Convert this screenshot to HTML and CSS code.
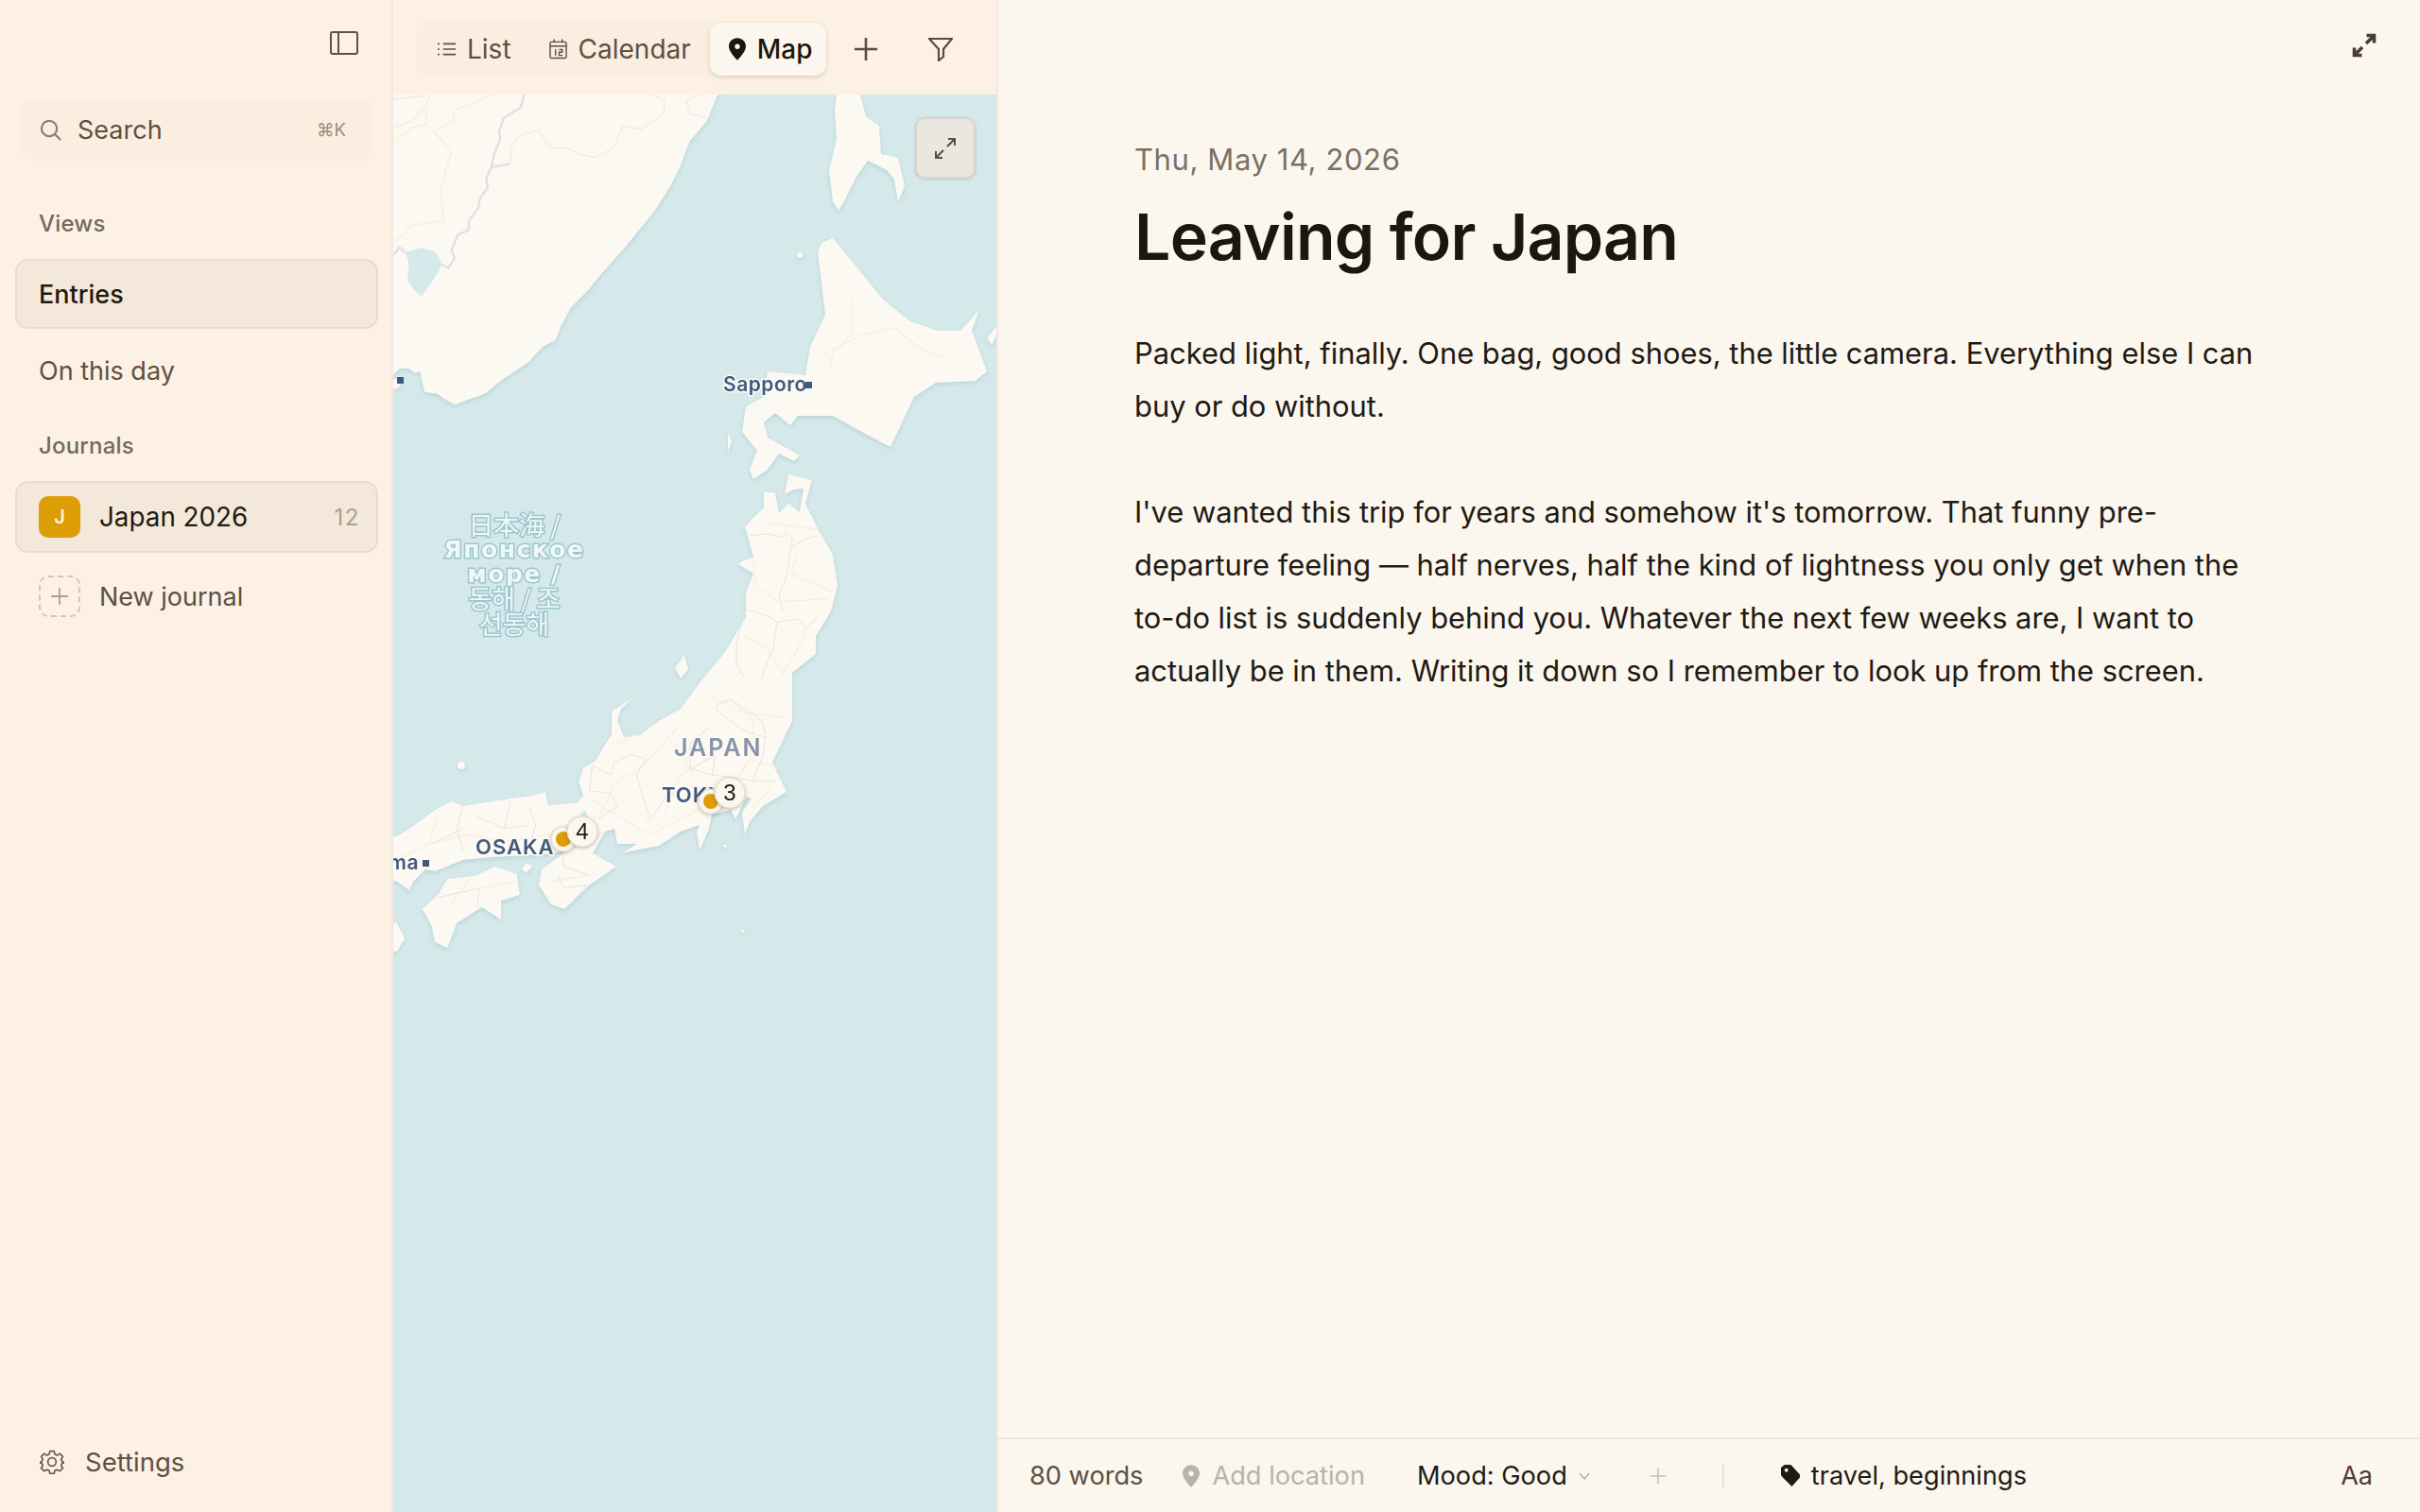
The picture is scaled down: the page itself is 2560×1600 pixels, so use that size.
FILE: index.html
```html
<!DOCTYPE html>
<html lang="en">
<head>
  <meta charset="UTF-8" />
  <title>Japan 2026</title>
  <link rel="stylesheet" href="styles.css">
</head>
<body>
  <div class="app">

    <aside class="sidebar">
      <div class="side-top">
        <svg class="panel-icon" viewBox="0 0 30 26"><rect x="1" y="1" width="28" height="23" rx="2"/><path d="M9 1v23"/></svg>
      </div>
      <div class="search">
        <svg viewBox="0 0 24 24"><circle cx="10.5" cy="10.5" r="8.5"/><path d="M17 17l6 6"/></svg>
        <span class="search-label">Search</span>
        <span class="kbd">⌘K</span>
      </div>
      <h4 class="side-head">Views</h4>
      <div class="side-item active">Entries</div>
      <div class="side-item">On this day</div>
      <h4 class="side-head journals-head">Journals</h4>
      <div class="side-item active journal">
        <span class="badge">J</span>
        <span class="journal-name">Japan 2026</span>
        <span class="count">12</span>
      </div>
      <div class="side-item journal new-journal">
        <span class="badge dashed">
          <svg viewBox="0 0 20 20"><path d="M10 2v16M2 10h16"/></svg>
        </span>
        <span>New journal</span>
      </div>
      <div class="settings">
        <svg viewBox="0 0 24 24"><circle cx="12" cy="12" r="4"/><path d="M10 1.500h4l.7 3 2.300 1 2.700-1.500 2.800 2.800-1.500 2.700 1 2.300 3 .7v0l-3 .7-1 2.300 1.500 2.700-2.800 2.800-2.700-1.500-2.300 1-.7 3h-4l-.7-3-2.300-1-2.700 1.500-2.800-2.800 1.500-2.700-1-2.300-3-.7v0l3-.7 1-2.300-1.500-2.700 2.800-2.800 2.700 1.500 2.300-1z"/></svg>
        <span>Settings</span>
      </div>
    </aside>

    <section class="map-col">
      <div class="toolbar">
        <div class="tabs">
          <div class="tab">
            <svg class="tab-icon" viewBox="0 0 20 16"><path d="M6 2h14M6 8h14M6 14h14M0 2h2M0 8h2M0 14h2"/></svg>
            List
          </div>
          <div class="tab">
            <svg class="tab-icon cal" viewBox="0 0 20 22"><rect x="1" y="3" width="18" height="18" rx="1.500"/><path d="M1 7.500h18M5.500 0v4M14.500 0v4M7 11v7M11 11.500h3.500v3h-3.500v3.500h4"/></svg>
            Calendar
          </div>
          <div class="tab current">
            <svg class="tab-icon" viewBox="0 0 20 26"><path class="solid" fill-rule="evenodd" d="M10 0c5.500 0 10 4.200 10 9.800C20 16 13 23 10 26 7 23 0 16 0 9.800 0 4.200 4.500 0 10 0zm0 7a3 3 0 1 0 0 6 3 3 0 0 0 0-6z"/></svg>
            Map
          </div>
        </div>
        <svg class="tool plus" viewBox="0 0 26 26"><path d="M13 1v24M1 13h24"/></svg>
        <svg class="tool filter" viewBox="0 0 26 26"><path d="M1 2h24l-9 11v8l-5 4V13z"/></svg>
      </div>

      <div class="map">
        <svg class="map-svg" viewBox="416 100 638 1500" preserveAspectRatio="xMinYMin slice">
          <rect x="416" y="100" width="638" height="1500" class="sea"/>

          <g class="land">
            <path transform="translate(416 100) scale(.3333)" d="M-10 -10H1040L1030 0 995 85 940 150 910 230 880 290 830 370 740 480 660 570 640 595 620 620 565 675 530 740 515 780 475 800 430 850 340 910 290 950 195 985 160 965 140 950 100 945 85 880 70 885 50 870 20 870 0 890-10 890Z"/>
            <path d="M885 100H910L916 123 930 133 932 163 950 167 957 197 950 213 946 190 938 180 918 170 906 187 893 213 887 223 881 213 877 180 885 147 883 117Z"/>
            <path d="M869 257 881 252 910 287 934 317 963 340 991 350 1016 350 1036 328 1028 350 1044 393 1032 403 990 405 967 420 942 473 917 460 881 440 844 440 836 450 820 437 808 447 812 463 846 482 840 488 824 480 812 497 797 507 793 497 801 477 785 457 789 430 808 420 812 393 852 397 857 367 873 333 865 267Z"/>
            <path d="M834 502 859 508 852 533 867 563 881 587 886 620 879 647 863 673 863 692 838 712 838 737 838 763 817 807 832 838 807 853 793 870 788 883 785 860 795 845 790 843 778 867 773 857 753 862 750 877 740 900 737 880 740 873 720 880 697 895 687 897 660 902 673 893 653 893 650 877 640 880 627 903 652 917 623 937 610 950 597 962 583 957 570 937 573 920 587 910 600 900 583 903 560 905 520 907 490 910 460 922 450 920 437 933 433 942 420 933 410 930 410 885 420 885 433 877 460 857 477 848 490 853 540 845 563 842 577 838 580 852 610 850 617 842 612 827 617 813 630 805 647 777 647 753 670 738 657 750 653 763 660 780 677 778 697 763 720 750 742 720 767 690 789 653 789 627 797 607 781 597 787 593 797 590 788 557 808 537 808 520 820 522 824 543 834 533 846 542 850 517 840 518 830 523Z"/>
            <path transform="translate(420 720) scale(.3333)" d="M310 590 380 615 390 680 330 700 330 760 270 720 190 770 160 850 120 830 110 780 80 725 130 680 160 630 250 620Z"/>
            <path transform="translate(420 720) scale(.3333)" d="M-20 770 0 770 25 820 0 860-20 860ZM410 580 430 590 410 610 395 600ZM1040 518l8 8-8 4-5-6ZM1095 790l8 8-5 3-6-7Z"/>
            <path d="M724 693 714 707 720 718 728 708Z"/>
            <path d="M770 458 774 467 770 478Z"/>
            <circle cx="846" cy="270" r="3"/>
            <circle cx="488" cy="810" r="4"/>
            <path d="M1054 345 1044 358 1049 365 1054 355Z"/>
            <path transform="translate(416 100) scale(.3333)" d="M0 905 20 900 22 925 10 935 0 935Z"/>
          </g>

          <path class="water-in" transform="translate(416 100) scale(.3333)" d="M40 500 90 487 135 500 155 540 120 600 90 640 70 625 45 590 50 540Z"/>
          <path class="water-in" d="M614 862 619 857 622 865 617 870Z"/>

          <g class="roads">
            <path transform="translate(416 100) scale(.3333)" d="M0 155 60 105 105 95 130 120 185 180 150 300 160 400 60 415 25 450 0 465M130 120 190 85 195 50 320 0M105 95V30L120 0"/>
            <path transform="translate(420 420) scale(.408 .3333)" d="M925 520 930 600 990 650M1040 500 1020 560 1130 620M1000 650 1120 640M1060 740 1040 800 1000 880M960 400 1090 420M900 760 960 800 1000 880"/>
            <path transform="translate(420 720) scale(.3333)" d="M20 560 100 520 220 490 330 510 440 500 500 480M620 380 700 430 800 490 940 420 1060 340 1120 250 1130 130 1060 60M640 440 690 330 780 270 900 140M880 200 940 300M130 690 260 660 370 640M170 710 240 620M130 430 100 520M580 520 660 480M1000 50 1090 100 1240 120M1120 250 1210 280M700 200 760 170M850 420 900 300 1000 240M480 640 600 620M1130 400 1190 340"/>
            <path transform="translate(420 0) scale(.408 .3333)" d="M1100 1130 1200 1065 1290 1040 1350 1100 1420 1140M1180 950 1180 1060 1130 1120 1120 1180"/>
          </g>

          <g class="borders">
            <path transform="translate(416 100) scale(.3333)" d="M370 220 375 165 400 130 460 115 500 170 550 170 590 190 640 200 700 170 730 100 790 110 860 60 860 20 820 0M970 0 930 20 940 60 1000 75M0 15 100 5M0 105 60 85 105 30"/>
            <path transform="translate(420 420) scale(.408 .3333)" d="M915 440 960 435 1000 445 1010 430 1025 450 1020 490 1010 570 990 630 1000 680M1020 480 1060 450 1090 440M905 675 960 695 985 715 1040 705 1060 735 1090 700M985 715 975 800 950 870 945 900M905 675 880 780 880 850 900 890"/>
            <path transform="translate(420 720) scale(.3333)" d="M1010 80 1060 60 1160 130 1170 180 1100 160 1020 100 1010 80M930 280 1000 300 1080 310 1130 320 1200 320M880 330 820 420 790 450M690 260 740 235 790 250 760 300 800 430M620 270 680 300 690 260M610 350 680 360 700 400 640 440M210 400 190 470 210 540M360 385 340 470 250 430M420 400 440 460 420 530M510 620 530 660 600 650 560 700M520 520 530 590 610 620M990 150 930 200 930 280M130 690 170 680 260 660 255 720M620 270 610 350M1170 180 1160 240 1130 320M1000 300 1010 240 930 280M110 520 210 470M340 470 420 460"/>
          </g>
          <path class="border-pink" transform="translate(416 100) scale(.3333)" d="M415 0 405 40 350 75 335 120 340 140 320 190 310 235 295 265 300 295 275 330 270 360 240 400 240 430 205 445 185 495 195 520 175 550 155 540M310 230 370 220M0 510 20 485 40 505"/>

          <g class="sea-label">
            <text x="544" y="566" class="thin">日本海 /</text>
            <text x="544" y="590" class="bold">Японское</text>
            <text x="544" y="616" class="bold">море /</text>
            <text x="544" y="644" class="thin">동해 / 조</text>
            <text x="544" y="671" class="thin">선동해</text>
          </g>

          <text x="765" y="414" class="city small">Sapporo</text>
          <rect x="852" y="404" width="7" height="7" class="dot"/>
          <rect x="420" y="399" width="7" height="7" class="dot"/>
          <text x="713" y="800" class="country">JAPAN</text>
          <text x="700" y="849" class="city">TOKYO</text>
          <text x="503" y="904" class="city">OSAKA</text>
          <text x="443" y="920" class="city small end">ma</text>
          <rect x="447" y="910" width="7" height="7" class="dot"/>

          <g class="marker">
            <circle cx="596" cy="888" r="13" class="ring"/>
            <circle cx="596" cy="888" r="8" class="amber"/>
            <circle cx="616" cy="880" r="16" class="ring"/>
            <text x="616" y="888">4</text>
          </g>
          <g class="marker">
            <circle cx="752" cy="848" r="13" class="ring"/>
            <circle cx="752" cy="848" r="8" class="amber"/>
            <circle cx="772" cy="839" r="16" class="ring"/>
            <text x="772" y="847">3</text>
          </g>
        </svg>

        <div class="map-expand">
          <svg viewBox="0 0 24 24"><path d="M14 10 22 2M15 2h7v7M10 14 2 22M2 15v7h7"/></svg>
        </div>
      </div>
    </section>

    <main class="entry">
      <div class="entry-top">
        <svg class="entry-expand" viewBox="0 0 26 26"><path d="M15 11 23 3M15.500 2.500H23.500V10.500M11 15 3 23M2.500 15.500V23.500H10.500"/></svg>
      </div>
      <article class="entry-body">
        <div class="entry-date">Thu, May 14, 2026</div>
        <h1>Leaving for Japan</h1>
        <p>Packed light, finally. One bag, good shoes, the little camera. Everything else I can buy or do without.</p>
        <p>I've wanted this trip for years and somehow it's tomorrow. That funny pre-departure feeling — half nerves, half the kind of lightness you only get when the to-do list is suddenly behind you. Whatever the next few weeks are, I want to actually be in them. Writing it down so I remember to look up from the screen.</p>
      </article>
      <footer class="entry-foot">
        <span class="words">80 words</span>
        <span class="location">
          <svg viewBox="0 0 20 26"><path fill-rule="evenodd" d="M10 0c5.500 0 10 4.200 10 9.800C20 16 13 23 10 26 7 23 0 16 0 9.800 0 4.200 4.500 0 10 0zm0 7a3 3 0 1 0 0 6 3 3 0 0 0 0-6z"/></svg>
          Add location
        </span>
        <span class="mood">Mood: Good
          <svg viewBox="0 0 12 8"><path d="M1 1l5 6 5-6"/></svg>
        </span>
        <svg class="foot-plus" viewBox="0 0 20 20"><path d="M10 1v18M1 10h18"/></svg>
        <span class="foot-div"></span>
        <span class="tags">
          <svg viewBox="0 0 22 24"><path fill-rule="evenodd" d="M0 3 4 0h7l10 11v3L12 24 1 13 0 11zm6 1a2 2 0 1 0 0 4 2 2 0 0 0 0-4z"/></svg>
          travel, beginnings
        </span>
        <span class="aa">Aa</span>
      </footer>
    </main>

  </div>
</body>
</html>
```

FILE: styles.css
```css
* { margin: 0; padding: 0; box-sizing: border-box; }
html, body { height: 100%; }
body {
  font-family: 'Inter', 'Noto Sans', sans-serif;
  color: #1f1a13;
  background: #fbf6ee;
  overflow: hidden;
}
.app { display: flex; height: 1600px; }
svg { fill: none; stroke: currentColor; display: block; }

/* sidebar */
.sidebar {
  width: 416px;
  flex: none;
  background: #fdf1e5;
  border-right: 2px solid #f2e9de;
  padding: 0 14px 0 16px;
  display: flex;
  flex-direction: column;
}
.side-top { height: 104px; padding-top: 33px; display: flex; justify-content: flex-end; padding-right: 21px; }
.panel-icon { width: 30px; height: 26px; color: #5f5143; stroke-width: 2; }
.search {
  height: 66px;
  margin: 0 4px 0 5px;
  padding: 0 30px 0 21px;
  background: #fbeee0;
  border-radius: 18px;
  display: flex;
  align-items: center;
  color: #5d5043;
}
.search svg { width: 23px; height: 23px; color: #8a7e71; stroke-width: 2.2; }
.search-label { font-size: 27px; margin-left: 17px; flex: 1; }
.kbd { font-size: 18.500px; color: #9a8d80; }
.side-head {
  font-size: 24px;
  font-weight: 500;
  color: #74695d;
  margin: 47px 0 0 25px;
  height: 57px;
  line-height: 40px;
  letter-spacing: .2px;
}
.journals-head { margin-top: 16px; height: 57px; }
.side-item {
  height: 74px;
  padding: 0 23px;
  display: flex;
  align-items: center;
  font-size: 27px;
  color: #5d5043;
  border: 2px solid transparent;
  border-radius: 14px;
  margin-bottom: 7px;
}
.side-item.active {
  background: #f4e8da;
  border-color: #e8dccd;
  color: #22190f;
  font-weight: 500;
}
.journal { height: 76px; padding: 0 17px 0 23px; margin-bottom: 10px; }
.journal.active { font-weight: 400; }
.new-journal { height: 60px; margin-top: 6px; }
.journal-name { flex: 1; font-size: 27.800px; }
.badge {
  width: 44px;
  height: 44px;
  border-radius: 10px;
  background: #dc9d07;
  color: #fdf1d8;
  font-size: 20px;
  font-weight: 600;
  display: flex;
  align-items: center;
  justify-content: center;
  margin-right: 20px;
  flex: none;
}
.badge.dashed { background: none; border: 2px dashed #cfc6ba; color: #a89d90; }
.badge.dashed svg { width: 22px; height: 22px; stroke-width: 1.6; }
.count { font-size: 24px; color: #aaa093; letter-spacing: 1.5px; }
.settings {
  margin-top: auto;
  margin-bottom: 36px;
  padding-left: 26px;
  display: flex;
  align-items: center;
  font-size: 27.500px;
  color: #5d5043;
}
.settings svg { width: 26px; height: 26px; stroke-width: 1.6; color: #6a5d4f; margin-right: 22px; }

/* map column */
.map-col {
  width: 640px;
  flex: none;
  display: flex;
  flex-direction: column;
  border-right: 2px solid #f2e9de;
}
.toolbar {
  height: 100px;
  background: #fdf1e5;
  display: flex;
  align-items: center;
  padding: 4px 0 0 24px;
  flex: none;
}
.tabs {
  display: flex;
  align-items: center;
  height: 60px;
  background: #fbeee0;
  border-radius: 14px;
  padding: 0 0 0 23px;
}
.tab {
  display: flex;
  align-items: center;
  font-size: 28px;
  color: #5d5043;
  margin-right: 40px;
}
.tab-icon { width: 19px; height: 16px; margin-right: 12px; stroke-width: 1.8; }
.tab-icon.cal { height: 22px; stroke-width: 1.5; }
.tab.current {
  width: 123px;
  height: 56px;
  margin: 0 0 0 -20px;
  padding: 0 0 0 20px;
  color: #1c160e;
  font-weight: 500;
  background: #fbf6ee;
  border-radius: 12px;
  box-shadow: 0 2px 5px rgba(90, 60, 30, .18);
}
.tab.current .tab-icon { width: 18px; height: 24px; }
.solid { fill: #1c160e; stroke: none; }
.tool { color: #5a4d3f; width: 26px; height: 26px; stroke-width: 2.6; }
.plus { margin-left: 29px; }
.filter { margin-left: 53px; stroke-width: 2.2; }

.map { flex: 1; position: relative; overflow: hidden; }
.map-svg { width: 638px; height: 1500px; stroke: none; }
.map-expand {
  position: absolute;
  left: 552px;
  top: 24px;
  width: 64px;
  height: 65px;
  background: #e9e7e0;
  border: 2px solid #d9d5cc;
  border-radius: 10px;
  box-shadow: 0 1px 3px rgba(80, 70, 50, .2);
  display: flex;
  align-items: center;
  justify-content: center;
}
.map-expand svg { width: 24px; height: 24px; color: #5a4d3f; stroke-width: 2; }

.sea { fill: #d5e8ea; }
.land { fill: #fcf9f3; filter: drop-shadow(0 2px 2px rgba(150, 190, 200, .45)); }
.water-in { fill: #d5e8ea; }
.roads path, .borders path, .border-pink {
  fill: none;
  vector-effect: non-scaling-stroke;
  stroke-linejoin: round;
}
.roads path { stroke: #f9eed4; stroke-width: 1.2; }
.borders path { stroke: #e6e3dc; stroke-width: 1; }
.border-pink { stroke: #e9d5d5; stroke-width: 2; }

.sea-label text {
  text-anchor: middle;
  font-family: 'DejaVu Sans', 'Noto Sans CJK KR', sans-serif;
  fill: #f0f7f8;
  stroke: #9cc6d0;
  stroke-width: 3;
  paint-order: stroke;
}
.sea-label .thin { font-family: 'Noto Sans CJK JP', 'Noto Sans CJK KR', sans-serif; font-size: 27px; font-weight: 400; }
.sea-label .bold { font-size: 25px; font-weight: 700; letter-spacing: 1.5px; }

.city {
  font-family: 'Inter', sans-serif;
  font-size: 22px;
  font-weight: 600;
  fill: #3f5a7e;
  letter-spacing: 1px;
  stroke: #fdfaf4;
  stroke-width: 3;
  paint-order: stroke;
}
.city.small { font-size: 21px; letter-spacing: .5px; }
.city.end { text-anchor: end; }
.country {
  font-family: 'Inter', sans-serif;
  font-size: 25px;
  font-weight: 600;
  letter-spacing: 2px;
  fill: #8793a8;
  stroke: #fdfaf4;
  stroke-width: 2;
  paint-order: stroke;
}
.dot { fill: #3f5a7e; }
.marker .ring {
  fill: #fbf6ee;
  stroke: #e5dfd3;
  stroke-width: 1;
  filter: drop-shadow(0 1px 2px rgba(70, 50, 30, .35));
}
.marker .amber { fill: #dc9d07; }
.marker text {
  font-family: 'Liberation Sans', sans-serif;
  font-size: 24px;
  text-anchor: middle;
  fill: #1c160e;
}

/* entry */
.entry { flex: 1; display: flex; flex-direction: column; min-width: 0; }
.entry-top { height: 149px; flex: none; display: flex; justify-content: flex-end; padding: 35px 46px 0 0; }
.entry-expand { width: 26px; height: 26px; color: #4a3f33; stroke-width: 3.6; }
.entry-body { flex: 1; padding: 0 0 0 144px; width: 1344px; }
.entry-date { font-size: 31px; color: #7a7064; line-height: 40px; letter-spacing: .6px; }
h1 {
  font-size: 68px;
  font-weight: 600;
  line-height: 88px;
  letter-spacing: -.8px;
  color: #1c160e;
  margin: 17px 0 52px;
}
.entry-body p {
  font-size: 30.870px;
  line-height: 56px;
  margin-bottom: 56px;
}
.entry-foot {
  height: 79px;
  flex: none;
  border-top: 2px solid #ece6da;
  display: flex;
  align-items: center;
  font-size: 27.200px;
  padding: 0 50px 0 33px;
}
.entry-foot svg { fill: currentColor; stroke: none; }
.words { color: #5d5043; }
.location { display: flex; align-items: center; color: #b8b2a8; margin-left: 42px; }
.location svg { width: 18px; height: 24px; margin-right: 13px; }
.mood { display: flex; align-items: center; margin-left: 55px; }
.mood svg { width: 12px; height: 8px; margin-left: 12px; fill: none; stroke: #b0a89c; stroke-width: 1.2; }
.entry-foot .foot-plus { width: 18px; height: 18px; margin-left: 63px; fill: none; stroke: #c4bdb1; stroke-width: 1.8; }
.foot-div { width: 2px; height: 26px; background: #e8e2d6; margin-left: 59px; }
.tags { display: flex; align-items: center; margin-left: 60px; }
.tags svg { width: 21px; height: 23px; margin-right: 11px; }
.aa { margin-left: auto; color: #4a3f33; font-size: 27px; }
```
